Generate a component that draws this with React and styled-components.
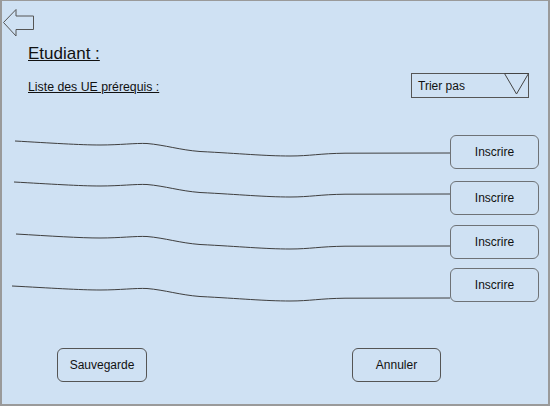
import React from 'react'
import styled, { createGlobalStyle } from 'styled-components'

const GlobalStyle = createGlobalStyle`
    html, body {
        margin: 0;
        padding: 0;
        background: #ffffff;
    }
    body {
        font-family: "Liberation Sans", Arial, sans-serif;
        color: #111;
    }
`

// squiggle shape, x in page coords, y relative to the line start
const WAVE = 'C 50 2, 80 4, 100 4 C 120 4, 135 2, 147 2.5 C 165 4, 180 9, 200 10.5 C 240 12.5, 265 15, 290 15 C 310 15, 320 12.5, 345 12.2 L 450 12'

const courses = [
    { id: 1, gap: 0, startX: 15, startY: 6 },
    { id: 2, gap: 12, startX: 14, startY: 1 },
    { id: 3, gap: 10, startX: 16, startY: 9 },
    { id: 4, gap: 9, startX: 12, startY: 18 },
]

const Wave = ({ startX, startY }) => (
    <WaveSvg viewBox="0 0 438 34" preserveAspectRatio="none">
        <g transform={`translate(-12 ${startY})`}>
            <path d={`M ${startX} 0 ${WAVE}`} fill="none" stroke="#3f3f3f" strokeWidth="1" />
        </g>
    </WaveSvg>
)

export default function App() {
    return (
        <>
            <GlobalStyle />
            <Frame>
                <BackIcon viewBox="0 0 36 38">
                    <path d="M1.5 21.5 L14 8.5 L14 15 L31.5 15 L31.5 28.5 L14 28.5 L14 35 Z" fill="none" stroke="#555" strokeWidth="1" />
                </BackIcon>
                <Title>Etudiant :</Title>
                <Toolbar>
                    <Label>Liste des UE prérequis :</Label>
                    <Select>
                        <span>Trier pas</span>
                        <Caret viewBox="0 0 25 22">
                            <path d="M0.5 0.5 L24.5 0.5 L12.5 21 Z" fill="none" stroke="#444" strokeWidth="1" />
                        </Caret>
                    </Select>
                </Toolbar>
                <List>
                    {courses.map(c => (
                        <Row key={c.id} gap={c.gap}>
                            <Wave startX={c.startX} startY={c.startY} />
                            <RowButton>Inscrire</RowButton>
                        </Row>
                    ))}
                </List>
                <Footer>
                    <FooterButton>Sauvegarde</FooterButton>
                    <FooterButton width={89}>Annuler</FooterButton>
                </Footer>
            </Frame>
        </>
    )
}

const Frame = styled.div`
    box-sizing: border-box;
    width: 550px;
    height: 406px;
    background: #cfe1f3;
    border: 2px solid #9a9a9a;
    border-top-width: 1px;
    display: flex;
    flex-direction: column;
`

const BackIcon = styled.svg`
    display: block;
    width: 36px;
    height: 38px;
    flex-shrink: 0;
`

const Title = styled.div`
    margin: 5px 0 0 26px;
    font-size: 17px;
    line-height: 20px;
    text-decoration: underline;
    color: #111;
`

const Toolbar = styled.div`
    display: flex;
    align-items: center;
    justify-content: space-between;
    margin: 9px 19px 0 26px;
    height: 25px;
`

const Label = styled.div`
    font-size: 12.3px;
    line-height: 14px;
    padding-top: 2px;
    text-decoration: underline;
`

const Select = styled.div`
    box-sizing: border-box;
    position: relative;
    width: 118px;
    height: 25px;
    border: 1px solid #555;
    display: flex;
    align-items: center;
    padding-left: 6px;
    font-size: 12px;
    line-height: 14px;
`

const Caret = styled.svg`
    position: absolute;
    right: -1px;
    top: -1px;
    width: 25px;
    height: 22px;
`

const List = styled.div`
    display: flex;
    flex-direction: column;
    margin-top: 37px;
`

const Row = styled.div`
    display: flex;
    align-items: stretch;
    height: 34px;
    margin-top: ${p => p.gap}px;
    padding: 0 9px 0 10px;
`

const WaveSvg = styled.svg`
    flex: 1;
    height: 34px;
    overflow: visible;
`

const RowButton = styled.button`
    box-sizing: border-box;
    width: 89px;
    height: 34px;
    flex-shrink: 0;
    background: transparent;
    border: 1px solid #6e7276;
    border-radius: 6px;
    font-family: "Liberation Sans", Arial, sans-serif;
    font-size: 12px;
    color: #111;
    padding: 0;
`

const Footer = styled.div`
    display: flex;
    gap: 205px;
    margin: 46px 0 0 55px;
`

const FooterButton = styled(RowButton)`
    width: ${p => p.width || 90}px;
    border-color: #555;
`
